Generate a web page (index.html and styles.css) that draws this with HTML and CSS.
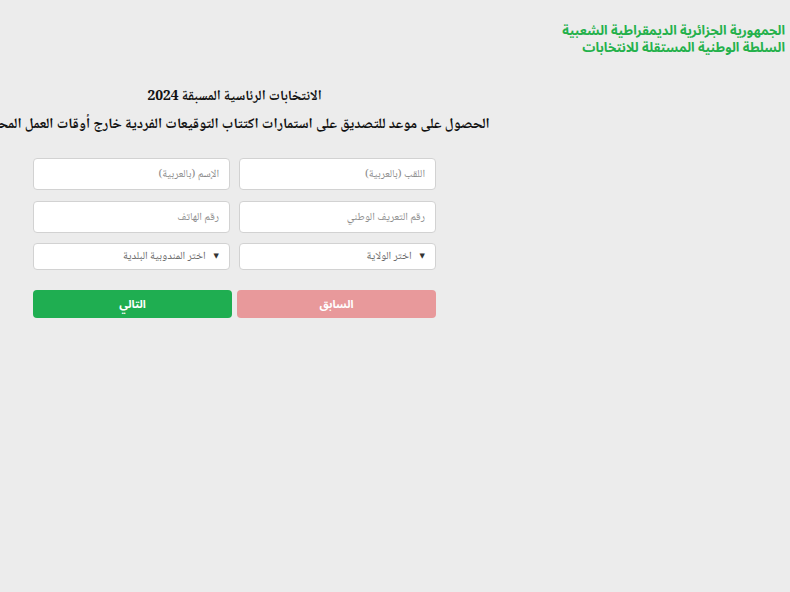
FILE: index.html
```html
<!DOCTYPE html>
<html lang="ar" dir="rtl">
<head>
<meta charset="utf-8">
<link rel="stylesheet" href="styles.css">
</head>
<body>
<div class="page">
  <header class="brand">
    <div class="brand-line">الجمهورية الجزائرية الديمقراطية الشعبية</div>
    <div class="brand-line">السلطة الوطنية المستقلة للانتخابات</div>
  </header>
  <main class="form-wrap">
    <div class="titles">
      <h1 class="title">الانتخابات الرئاسية المسبقة 2024</h1>
      <h2 class="subtitle">الحصول على موعد للتصديق على استمارات اكتتاب التوقيعات الفردية خارج أوقات العمل المحددة</h2>
    </div>
    <div class="grid">
      <div class="field">اللقب (بالعربية)</div>
      <div class="field">الإسم (بالعربية)</div>
      <div class="field">رقم التعريف الوطني</div>
      <div class="field">رقم الهاتف</div>
      <div class="field select"><span class="caret">▼</span><span>اختر الولاية</span></div>
      <div class="field select"><span class="caret">▼</span><span>اختر المندوبية البلدية</span></div>
    </div>
    <div class="buttons">
      <div class="btn prev">السابق</div>
      <div class="btn next">التالي</div>
    </div>
  </main>
</div>
</body>
</html>
```

FILE: styles.css
```css
html, body {
  margin: 0;
  padding: 0;
  background: #ececec;
  overflow: hidden;
}
body {
  width: 790px;
  height: 592px;
  font-family: "Noto Naskh Arabic", "Amiri", "Noto Serif", "DejaVu Serif", serif;
}
.page {
  padding: 23px 5px 0 0;
}
.brand {
  font-family: "Noto Sans Arabic", "Noto Kufi Arabic", "DejaVu Sans", sans-serif;
  font-weight: bold;
  color: #24b14b;
  font-size: 13px;
  line-height: 17px;
}
.form-wrap {
  width: 403px;
  margin-right: 349px;
  margin-top: 27px;
}
.titles {
  display: flex;
  flex-direction: column;
  align-items: center;
  white-space: nowrap;
  color: #111;
}
.title {
  margin: 0;
  font-size: 14px;
  line-height: 26px;
  font-weight: bold;
}
.subtitle {
  margin: 2px 0 0 0;
  font-size: 14.5px;
  line-height: 26px;
  font-weight: bold;
}
.grid {
  margin-top: 20px;
  display: grid;
  grid-template-columns: 197px 197px;
  grid-template-rows: 32px 32px 27px;
  column-gap: 9px;
}
.field {
  box-sizing: border-box;
  background: #fff;
  border: 1px solid #d2d2d2;
  border-radius: 4px;
  padding: 0 10px;
  display: flex;
  align-items: center;
  font-size: 11px;
  color: #8a8a8a;
}
.field:nth-child(3), .field:nth-child(4) {
  margin-top: 11px;
  margin-bottom: -11px;
}
.field:nth-child(5), .field:nth-child(6) {
  margin-top: 21px;
  margin-bottom: -21px;
}
.select {
  color: #666;
  gap: 8px;
}
.caret {
  font-size: 7px;
  color: #333;
}
.buttons {
  margin-top: 41px;
  display: flex;
  gap: 5px;
}
.btn {
  flex: 1;
  height: 28px;
  border-radius: 4px;
  display: flex;
  align-items: center;
  justify-content: center;
  color: #fff;
  font-family: "Noto Sans Arabic", "DejaVu Sans", sans-serif;
  font-weight: bold;
  font-size: 11px;
}
.prev {
  background: #e8999b;
}
.next {
  background: #1fae51;
}
```
